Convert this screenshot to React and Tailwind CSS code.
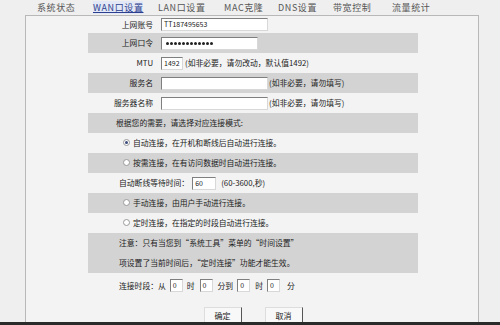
import React from "react"

const tabs = [
  { name: "系统状态", w: "w-[56px]" },
  { name: "WAN口设置", w: "w-[65px]", active: true },
  { name: "LAN口设置", w: "w-[66px]" },
  { name: "MAC克隆", w: "w-[54px]" },
  { name: "DNS设置", w: "w-[55px]" },
  { name: "带宽控制", w: "w-[59px]" },
  { name: "流量统计", w: "w-[60px]" },
]

const Row = ({ gray, className = "h-[20px]", children }) => (
  <div className={`flex items-center ${className} ${gray ? "bg-[#d3d3d3]" : ""}`}>{children}</div>
)

const Label = ({ children }) => (
  <div className="w-[73px] shrink-0 text-right pr-[8px]">{children}</div>
)

const Input = ({ className = "w-[107px]", value }) => (
  <div className={`h-[13px] bg-white border border-[#7f7f7f] border-b-[#d8d8d8] border-r-[#d8d8d8] flex items-center px-[2px] text-[7px] leading-none ${className}`}>
    {value}
  </div>
)

const Radio = ({ checked }) => (
  <div className="w-[7px] h-[7px] rounded-full border border-[#9a9a9a] bg-white flex items-center justify-center mr-[3px] shrink-0">
    {checked && <div className="w-[3px] h-[3px] rounded-full bg-[#3a4a7a]" />}
  </div>
)

const Box = ({ className = "" }) => (
  <div className={`w-[13px] h-[13px] bg-white border border-[#7f7f7f] border-b-[#d8d8d8] border-r-[#d8d8d8] flex items-center px-[2px] text-[7px] ${className}`}>0</div>
)

const Dots = () => (
  <div className="flex gap-[1px] ml-[2px]">
    {Array.from({ length: 12 }).map((_, i) => (
      <div key={i} className="w-[3px] h-[3px] rounded-full bg-[#222]" />
    ))}
  </div>
)

export default function App() {
  return (
    <div className="w-[500px] h-[325px] overflow-hidden bg-[#efefef] flex flex-col text-[#222] text-[7.8px] leading-none" style={{ fontFamily: '"Noto Sans CJK SC", "Liberation Sans", sans-serif' }}>
      <div className="h-[15px] shrink-0 flex items-center pl-[37px] text-[9px] tracking-[0.6px] text-[#555]">
        {tabs.map((t) => (
          <div key={t.name} className={t.w}>
            {t.active ? (
              <span className="text-[#2d3f8f] underline bg-[#e2e8f5]">{t.name}</span>
            ) : (
              t.name
            )}
          </div>
        ))}
      </div>

      <div className="flex-1 ml-[25px] w-[454px] bg-[#f3f3f3] border-t border-l border-r border-[#b8b8b8] pl-[62px] overflow-hidden">
        <div className="w-[330px] flex flex-col">
          <Row className="h-[17px]">
            <Label>上网账号</Label>
            <Input value="TT187495653" />
          </Row>
          <Row gray>
            <Label>上网口令</Label>
            <Input className="w-[97px]" value={<Dots />} />
          </Row>
          <Row>
            <Label>MTU</Label>
            <Input className="w-[22px]" value="1492" />
            <span className="ml-[2px] whitespace-nowrap">(如非必要，请勿改动，默认值1492)</span>
          </Row>
          <Row gray>
            <Label>服务名</Label>
            <Input />
            <span className="ml-[1px] whitespace-nowrap">(如非必要，请勿填写)</span>
          </Row>
          <Row>
            <Label>服务器名称</Label>
            <Input />
            <span className="ml-[1px] whitespace-nowrap">(如非必要，请勿填写)</span>
          </Row>
          <Row gray>
            <span className="pl-[28px]">根据您的需要，请选择对应连接模式:</span>
          </Row>
          <Row>
            <div className="pl-[35px] flex items-center">
              <Radio checked />
              <span>自动连接，在开机和断线后自动进行连接。</span>
            </div>
          </Row>
          <Row gray>
            <div className="pl-[35px] flex items-center">
              <Radio />
              <span>按需连接，在有访问数据时自动进行连接。</span>
            </div>
          </Row>
          <Row>
            <div className="pl-[31px] flex items-center whitespace-nowrap">
              <span>自动断线等待时间：</span>
              <Input className="w-[24px] ml-[3px]" value="60" />
              <span className="ml-[5px]">(60-3600,秒)</span>
            </div>
          </Row>
          <Row gray>
            <div className="pl-[35px] flex items-center">
              <Radio />
              <span>手动连接，由用户手动进行连接。</span>
            </div>
          </Row>
          <Row>
            <div className="pl-[35px] flex items-center">
              <Radio />
              <span>定时连接，在指定的时段自动进行连接。</span>
            </div>
          </Row>
          <div className="h-[40px] bg-[#d3d3d3] flex flex-col justify-around pl-[31px] whitespace-nowrap">
            <span>注意：只有当您到“系统工具”菜单的“时间设置”</span>
            <span>项设置了当前时间后，“定时连接”功能才能生效。</span>
          </div>
          <Row className="h-[25px]">
            <div className="pl-[31px] flex items-center whitespace-nowrap">
              <span>连接时段：从</span>
              <Box className="ml-[4px]" />
              <span className="ml-[4px]">时</span>
              <Box className="ml-[5px]" />
              <span className="ml-[5px]">分到</span>
              <Box className="ml-[4px]" />
              <span className="ml-[5px]">时</span>
              <Box className="ml-[4px]" />
              <span className="ml-[7px]">分</span>
            </div>
          </Row>
          <div className="flex justify-center gap-[23px] mt-[9px]">
            <button className="w-[38px] h-[18px] bg-[#f8f8f8] border border-[#ddd] border-b-[#555] border-r-[#555] text-[8px] text-[#222]">确定</button>
            <button className="w-[38px] h-[18px] bg-[#f8f8f8] border border-[#ddd] border-b-[#555] border-r-[#555] text-[8px] text-[#222]">取消</button>
          </div>
        </div>
      </div>

      <div className="h-[3px] shrink-0 bg-[#2a2a2a]" />
    </div>
  )
}
